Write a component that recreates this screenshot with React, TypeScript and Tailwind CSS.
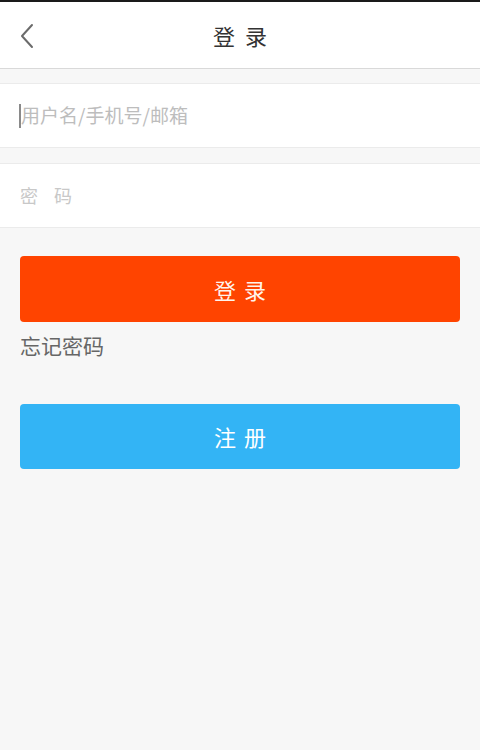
import React from "react";

const font = { fontFamily: '"Noto Sans CJK SC", "Noto Sans", sans-serif' };

export default function App() {
  return (
    <div className="min-h-screen bg-[#f7f7f7]" style={font}>
      {/* top bar */}
      <header className="relative flex h-[69px] items-center justify-center border-t-2 border-b border-t-[#1a1a1a] border-b-[#d9d9d9] bg-white">
        <button className="absolute left-[17px] top-[20px] flex h-[28px] w-[20px] items-center justify-center">
          <svg width="16" height="26" viewBox="0 0 16 26" fill="none">
            <path d="M13 2 L3 13 L13 24" stroke="#6b6b6b" strokeWidth="2" strokeLinecap="round" strokeLinejoin="round" />
          </svg>
        </button>
        <h1 className="text-[22px] tracking-[10px] pl-[10px] text-[#333]">登录</h1>
      </header>

      <div className="mt-[14px] flex h-[65px] items-center border-y border-[#ebebeb] bg-white pl-[19px] pr-5">
        <span className="h-[24px] w-[2px] shrink-0 bg-[#8a8a8a]" />
        <input
          placeholder="用户名/手机号/邮箱"
          className="w-full bg-transparent text-[19px] text-[#333] outline-none placeholder:text-[#bdbdbd]"
        />
      </div>

      <div className="mt-[15px] flex h-[65px] items-center border-y border-[#ebebeb] bg-white px-5">
        <input
          type="password"
          placeholder="密 码"
          className="w-full bg-transparent text-[18px] tracking-[6px] text-[#333] outline-none placeholder:text-[#c8c8c8]"
        />
      </div>

      <div className="px-5">
        <button className="mt-[28px] flex h-[66px] w-full items-center justify-center rounded-[4px] bg-[#ff4400] text-[22px] tracking-[8px] pl-[8px] text-[#fff4ec]">
          登录
        </button>
        <div className="mt-[8px] h-[30px] text-[21px] leading-[30px] text-[#666]">忘记密码</div>
        <button className="mt-[44px] flex h-[65px] w-full items-center justify-center rounded-[4px] bg-[#33b4f5] text-[22px] tracking-[8px] pl-[8px] text-white">
          注册
        </button>
      </div>
    </div>
  );
}
